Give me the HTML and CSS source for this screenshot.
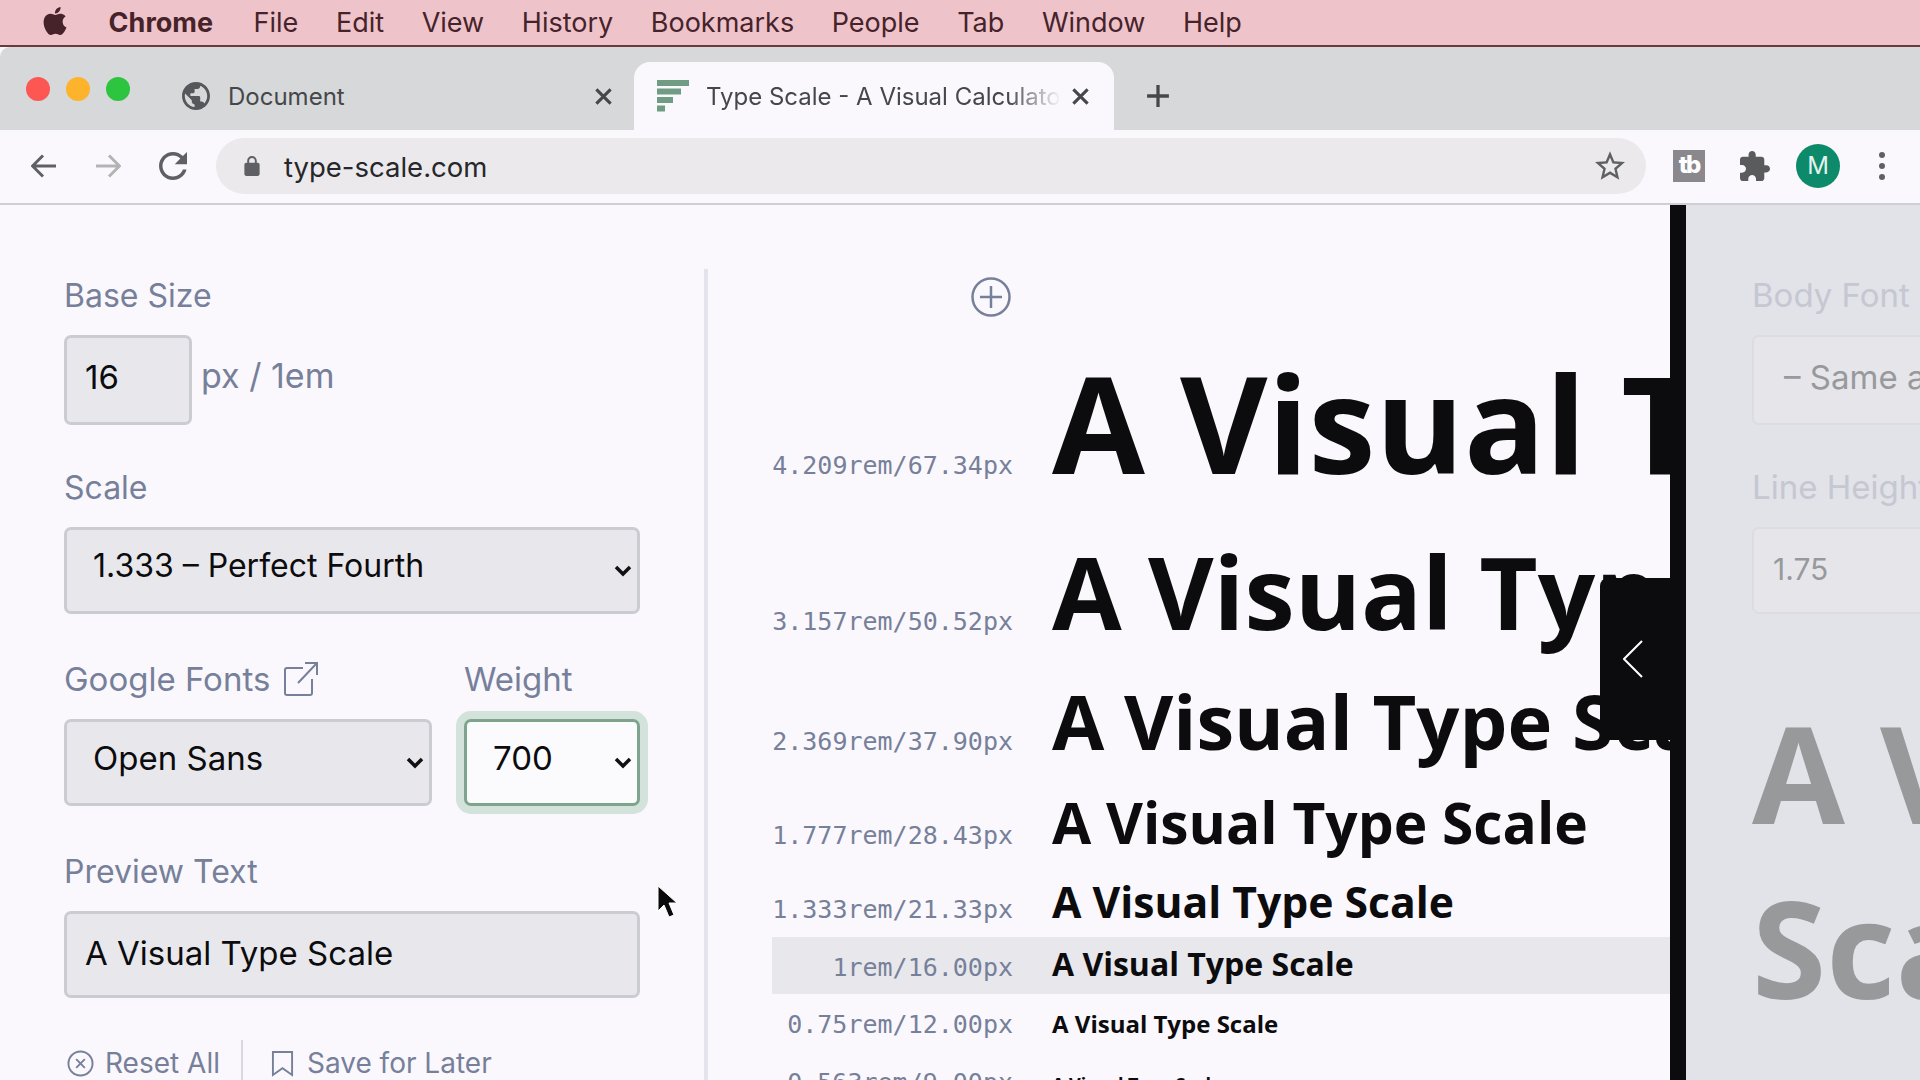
FILE: index.html
```html
<!DOCTYPE html>
<html lang="en">
<head>
    <meta charset="UTF-8">
    <meta name="viewport" content="width=device-width, initial-scale=1.0">
    <title>Type Scale - A Visual Calculator</title>
    <link rel="stylesheet" href="styles.css">
</head>
<body>
    <!-- macOS menu bar -->
    <header class="menubar">
        <svg class="apple" viewBox="0 0 24 24"><path d="M12.152 6.896c-.948 0-2.415-1.078-3.96-1.04-2.04.027-3.91 1.183-4.961 3.014-2.117 3.675-.546 9.103 1.519 12.09 1.013 1.454 2.208 3.09 3.792 3.039 1.52-.065 2.09-.987 3.935-.987 1.831 0 2.35.987 3.96.948 1.637-.026 2.676-1.48 3.676-2.948 1.156-1.688 1.636-3.325 1.662-3.415-.039-.013-3.182-1.221-3.22-4.857-.026-3.04 2.48-4.494 2.597-4.559-1.429-2.09-3.623-2.324-4.39-2.376-2-.156-3.675 1.09-4.61 1.09zM15.53 3.83c.843-1.012 1.4-2.427 1.245-3.83-1.207.052-2.662.805-3.532 1.818-.78.896-1.454 2.338-1.273 3.714 1.338.104 2.715-.688 3.559-1.701"/></svg>
        <span class="menu-app">Chrome</span>
        <span>File</span>
        <span>Edit</span>
        <span>View</span>
        <span>History</span>
        <span>Bookmarks</span>
        <span>People</span>
        <span>Tab</span>
        <span>Window</span>
        <span>Help</span>
    </header>

    <!-- Tab strip -->
    <div class="tabstrip">
        <div class="traffic">
            <i class="light red"></i>
            <i class="light yellow"></i>
            <i class="light green"></i>
        </div>
        <div class="tab">
            <svg class="tab-icon" viewBox="2 2 20 20"><path d="M12 2C6.48 2 2 6.48 2 12s4.48 10 10 10 10-4.48 10-10S17.52 2 12 2zm-1 17.93c-3.95-.49-7-3.85-7-7.93 0-.62.08-1.21.21-1.79L9 15v1c0 1.1.9 2 2 2v1.93zm6.9-2.54c-.26-.81-1-1.39-1.9-1.39h-1v-3c0-.55-.45-1-1-1H8v-2h2c.55 0 1-.45 1-1V7h2c1.1 0 2-.9 2-2v-.41c2.93 1.19 5 4.06 5 7.41 0 2.08-.8 3.97-2.1 5.39z"/></svg>
            <span class="tab-title">Document</span>
            <svg class="tab-close" viewBox="0 0 16 16"><path d="M2 2l12 12M14 2L2 14"/></svg>
        </div>
        <div class="tab tab-active">
            <svg class="tab-favicon" viewBox="0 0 32 32"><path d="M0 0h32v6H0zM0 8.500h24v6H0zM0 17h16v6H0zM0 25.500h8v6H0z"/></svg>
            <span class="tab-title tab-fade">Type Scale - A Visual Calculator</span>
            <svg class="tab-close" viewBox="0 0 16 16"><path d="M2 2l12 12M14 2L2 14"/></svg>
        </div>
        <svg class="tab-new" viewBox="0 0 22 22"><path d="M11 1v20M1 11h20"/></svg>
    </div>

    <!-- Toolbar -->
    <div class="toolbar">
        <svg class="nav-icon" viewBox="0 0 26 26"><path d="M25 13H2M12 2.500L1.500 13 12 23.500"/></svg>
        <svg class="nav-icon nav-disabled" viewBox="0 0 26 26"><path d="M1 13h23M14 2.500L24.500 13 14 23.500"/></svg>
        <svg class="reload" viewBox="4 4 16 16"><path d="M17.650 6.350C16.200 4.900 14.210 4 12 4c-4.420 0-7.990 3.580-7.990 8s3.570 8 7.990 8c3.730 0 6.840-2.550 7.730-6h-2.080c-.82 2.330-3.040 4-5.650 4-3.310 0-6-2.690-6-6s2.690-6 6-6c1.660 0 3.140.69 4.220 1.780L13 11h7V4l-2.350 2.350z"/></svg>
        <div class="omnibox">
            <svg class="lock" viewBox="4 1 16 21"><path d="M18 8h-1V6c0-2.760-2.240-5-5-5S7 3.240 7 6v2H6c-1.100 0-2 .9-2 2v10c0 1.100.9 2 2 2h12c1.100 0 2-.9 2-2V10c0-1.100-.9-2-2-2zM9 6c0-1.660 1.340-3 3-3s3 1.340 3 3v2H9V6z"/></svg>
            <span class="url">type-scale.com</span>
            <svg class="star" viewBox="2 2 20 19"><path d="M22 9.240l-7.190-.62L12 2 9.190 8.630 2 9.240l5.460 4.730L5.820 21 12 17.270 18.180 21l-1.630-7.030L22 9.240zM12 15.400l-3.760 2.270 1-4.280-3.320-2.880 4.380-.38L12 6.100l1.710 4.040 4.380.38-3.320 2.880 1 4.280L12 15.400z"/></svg>
        </div>
        <span class="ext-tb">tb</span>
        <svg class="ext-puzzle" viewBox="2 1 21 21"><path d="M20.500 11H19V7c0-1.100-.9-2-2-2h-4V3.500C13 2.120 11.880 1 10.500 1S8 2.120 8 3.500V5H4c-1.100 0-1.990.9-1.990 2v3.800H3.500c1.490 0 2.700 1.210 2.700 2.700s-1.210 2.700-2.700 2.700H2V20c0 1.100.9 2 2 2h3.800v-1.500c0-1.490 1.210-2.700 2.700-2.700 1.490 0 2.700 1.210 2.700 2.700V22H17c1.100 0 2-.9 2-2v-4h1.500c1.380 0 2.500-1.120 2.500-2.500S21.880 11 20.500 11z"/></svg>
        <span class="avatar">M</span>
        <span class="kebab"><i></i><i></i><i></i></span>
    </div>

    <!-- Page -->
    <main class="page">
        <aside class="controls">
            <div class="field field-base">
                <label>Base Size</label>
                <div class="base-row">
                    <input class="control control-base" type="text" value="16">
                    <span class="unit">px / 1em</span>
                </div>
            </div>
            <div class="field">
                <label>Scale</label>
                <select class="control control-select control-scale">
                    <option>1.333 – Perfect Fourth</option>
                </select>
            </div>
            <div class="field-pair">
                <div class="field field-font">
                    <label>Google Fonts
                        <svg class="external" viewBox="0 0 34 34"><path d="M19 6H3a2 2 0 0 0-2 2v23a2 2 0 0 0 2 2h23a2 2 0 0 0 2-2V17M14 21L33 1M21 1h12v12"/></svg>
                    </label>
                    <select class="control control-select">
                        <option>Open Sans</option>
                    </select>
                </div>
                <div class="field field-weight">
                    <label>Weight</label>
                    <select class="control control-select is-focused">
                        <option>700</option>
                    </select>
                </div>
            </div>
            <div class="field">
                <label>Preview Text</label>
                <input class="control" type="text" value="A Visual Type Scale">
            </div>
            <div class="actions">
                <span class="action">
                    <svg class="action-icon" viewBox="0 0 28 28"><circle cx="14" cy="14" r="12.500"/><path d="M9.500 9.500l9 9M18.500 9.500l-9 9"/></svg>
                    Reset All
                </span>
                <span class="action action-save">
                    <svg class="action-icon action-bookmark" viewBox="0 0 24 28"><path d="M2 2h20v24l-10-7-10 7z"/></svg>
                    Save for Later
                </span>
            </div>
        </aside>

        <section class="preview">
            <div class="add-row">
                <svg class="add" viewBox="0 0 40 40"><circle cx="20" cy="20" r="18.500"/><path d="M20 9v22M9 20h22"/></svg>
            </div>
            <div class="step step-1"><span class="step-label">4.209rem/67.34px</span><span class="sample">A Visual Type Scale</span></div>
            <div class="step step-2"><span class="step-label">3.157rem/50.52px</span><span class="sample">A Visual Type Scale</span></div>
            <div class="step step-3"><span class="step-label">2.369rem/37.90px</span><span class="sample">A Visual Type Scale</span></div>
            <div class="step step-4"><span class="step-label">1.777rem/28.43px</span><span class="sample">A Visual Type Scale</span></div>
            <div class="step step-5"><span class="step-label">1.333rem/21.33px</span><span class="sample">A Visual Type Scale</span></div>
            <div class="step step-6"><span class="step-label">1rem/16.00px</span><span class="sample">A Visual Type Scale</span></div>
            <div class="step step-7"><span class="step-label">0.75rem/12.00px</span><span class="sample">A Visual Type Scale</span></div>
            <div class="step step-8"><span class="step-label">0.563rem/9.00px</span><span class="sample">A Visual Type Scale</span></div>
        </section>

        <button class="drawer-toggle">
            <svg viewBox="0 0 20 38"><path d="M19 1L1 19l18 18"/></svg>
        </button>

        <aside class="drawer">
            <div class="drawer-inner">
                <div class="field field-base">
                    <label>Body Font</label>
                    <div class="drawer-control">– Same as Heading</div>
                </div>
                <div class="field">
                    <label>Line Height</label>
                    <div class="drawer-control drawer-input">1.75</div>
                </div>
                <p class="drawer-sample">A Visual Type Scale</p>
            </div>
        </aside>
    </main>

    <!-- Mouse pointer -->
    <svg class="pointer" viewBox="0 0 21 33"><path d="M1 1v25l6-6 5 12 5-2-5-12h8z"/></svg>
</body>
</html>
```

FILE: styles.css
```css
/* General Styles */
* {
    box-sizing: border-box;
}

body {
    margin: 0;
    width: 1920px;
    height: 1080px;
    overflow: hidden;
    font-family: 'Inter', sans-serif;
    background-color: #faf8fc;
}

svg {
    display: block;
    flex: none;
}

/* Menu Bar */
.menubar {
    display: flex;
    align-items: center;
    gap: 37.600px;
    height: 47px;
    padding: 1px 0 1px 41px;
    background-color: #efc3ca;
    border-bottom: 2px solid #6b3a40;
    color: #46232a;
    font-size: 27px;
}

.apple {
    width: 28px;
    height: 30px;
    margin-top: -4px;
    margin-right: 2px;
    fill: #46232a;
}

.menu-app {
    margin-right: 3px;
    font-weight: 700;
}

/* Tab Strip */
.tabstrip {
    display: flex;
    height: 83px;
    background-color: #d6d8da;
    border-top-left-radius: 10px;
}

.traffic {
    display: flex;
    gap: 16px;
    width: 172px;
    padding: 30px 0 0 26px;
}

.light {
    width: 24px;
    height: 24px;
    border-radius: 50%;
}

.red {
    background-color: #fc5753;
}

.yellow {
    background-color: #fdb32c;
}

.green {
    background-color: #2dc53f;
}

.tab {
    display: flex;
    align-items: center;
    width: 462px;
    margin-top: 15px;
    padding: 0 21px 0 10px;
    color: #45474a;
    font-size: 24px;
}

.tab-icon {
    width: 28px;
    height: 28px;
    margin-right: 18px;
    fill: #55575a;
}

.tab-title {
    flex: 1;
    overflow: hidden;
    white-space: nowrap;
}

.tab-close {
    width: 19px;
    height: 19px;
    margin-left: 10px;
    fill: none;
    stroke: #45474a;
    stroke-width: 2.600;
}

.tab-active {
    width: 480px;
    padding: 0 24px 0 23px;
    background-color: #faf8fc;
    border-radius: 16px 16px 0 0;
}

.tab-favicon {
    width: 32px;
    height: 32px;
    margin-right: 17px;
    fill: #6f9c82;
}

.tab-fade {
    -webkit-mask-image: linear-gradient(to right, #000 85%, transparent 100%);
    mask-image: linear-gradient(to right, #000 85%, transparent 100%);
}

.tab-new {
    width: 24px;
    height: 24px;
    margin: 37px 0 0 32px;
    fill: none;
    stroke: #45474a;
    stroke-width: 3;
}

/* Toolbar */
.toolbar {
    display: flex;
    align-items: center;
    height: 75px;
    padding: 0 0 2px 31px;
    background-color: #faf8fc;
    border-bottom: 2px solid #d0ced2;
}

.nav-icon {
    width: 26px;
    height: 26px;
    margin-right: 38px;
    fill: none;
    stroke: #5f6063;
    stroke-width: 3;
}

.nav-disabled {
    stroke: #b3b3b6;
}

.reload {
    width: 28px;
    height: 28px;
    fill: #5f6063;
}

.omnibox {
    display: flex;
    align-items: center;
    width: 1430px;
    height: 56px;
    margin: 0 27px 0 29px;
    padding: 0 21px 0 28px;
    background-color: #ebe9eb;
    border-radius: 28px;
}

.lock {
    width: 16px;
    height: 20px;
    fill: #5f6063;
}

.url {
    flex: 1;
    margin: 2px 0 0 24px;
    color: #26272a;
    font-size: 27.500px;
}

.star {
    width: 30px;
    height: 29px;
    fill: #5f6063;
}

.ext-tb {
    width: 32px;
    height: 32px;
    margin-right: 35px;
    background-color: #8a888c;
    color: #fff;
    font-size: 24px;
    font-weight: 800;
    line-height: 30px;
    letter-spacing: -2px;
    text-align: center;
}

.ext-puzzle {
    width: 30px;
    height: 30px;
    margin-right: 26px;
    fill: #5a5b5d;
}

.avatar {
    width: 44px;
    height: 44px;
    margin-right: 39px;
    background-color: #0d8a6a;
    border-radius: 50%;
    color: #e3f3ee;
    font-size: 24px;
    line-height: 44px;
    text-align: center;
}

.kebab {
    display: flex;
    flex-direction: column;
    gap: 5px;
}

.kebab i {
    width: 6px;
    height: 6px;
    background-color: #5f6063;
    border-radius: 50%;
}

/* Page Layout */
.page {
    position: relative;
    display: flex;
    height: 875px;
    overflow: hidden;
}

.controls {
    flex: none;
    width: 708px;
    margin-top: 64px;
    padding: 3px 64px 0;
    border-right: 4px solid #e4e2ea;
}

label {
    display: flex;
    align-items: center;
    gap: 14px;
    height: 46px;
    margin-bottom: 17px;
    color: #76809a;
    font-size: 32px;
}

.field {
    margin-bottom: 42px;
}

.field-base {
    margin-bottom: 39px;
}

.field-pair {
    display: flex;
    gap: 32px;
}

.field-pair label {
    font-size: 33px;
}

.field-font {
    width: 368px;
}

.field-weight {
    width: 176px;
}

.control {
    display: block;
    width: 100%;
    height: 87px;
    padding: 0 18px 4px;
    background-color: #e8e8ec;
    border: 3px solid #cbccd2;
    border-radius: 7px;
    color: #0c0c0e;
    font-family: inherit;
    font-size: 33px;
    outline: none;
}

.control-select {
    padding: 0 18px 10px 26px;
    appearance: none;
    -webkit-appearance: none;
    background-image: url("data:image/svg+xml,%3Csvg xmlns='http://www.w3.org/2000/svg' viewBox='0 0 18 12'%3E%3Cpath d='M2 2l7 7 7-7' fill='none' stroke='%23111' stroke-width='3.500'/%3E%3C/svg%3E");
    background-repeat: no-repeat;
    background-position: right 5px center;
    background-size: 18px 12px;
}

.control-scale {
    font-size: 32px;
}

.is-focused {
    background-color: #fbfafd;
    border-color: #7ea48e;
    box-shadow: 0 0 0 8px #d3e2da;
}

.base-row {
    display: flex;
    align-items: center;
    gap: 9px;
}

.control-base {
    width: 128px;
    height: 90px;
    padding-bottom: 7px;
}

.unit {
    margin-bottom: 9px;
    color: #76809a;
    font-size: 34px;
}

.external {
    width: 34px;
    height: 34px;
    fill: none;
    stroke: #76809a;
    stroke-width: 2;
}

/* Reset and Save Links */
.actions {
    display: flex;
    align-items: center;
    height: 46px;
    margin-top: 2px;
    color: #76809a;
    font-size: 28px;
}

.action {
    display: flex;
    align-items: center;
    gap: 11px;
    padding-left: 3px;
}

.action-save {
    gap: 13px;
    margin-left: 21px;
    padding-left: 28px;
    border-left: 2px solid #d9d8e0;
    line-height: 46px;
}

.action-icon {
    width: 27px;
    height: 27px;
    fill: none;
    stroke: #76809a;
    stroke-width: 2;
}

.action-bookmark {
    width: 23px;
    height: 27px;
}

/* Preview Column */
.preview {
    flex: none;
    width: 962px;
    padding-left: 64px;
    overflow: hidden;
}

.add-row {
    display: flex;
    justify-content: flex-end;
    width: 241px;
    height: 130px;
    padding-top: 72px;
}

.add {
    width: 40px;
    height: 40px;
    margin-right: 2px;
    fill: none;
    stroke: #76809a;
    stroke-width: 2.500;
}

.step {
    display: flex;
    align-items: baseline;
    gap: 39px;
    width: 2000px;
    padding-top: 6px;
    white-space: nowrap;
}

.step-label {
    flex: none;
    width: 241px;
    color: #76809a;
    font-family: 'DejaVu Sans Mono', monospace;
    font-size: 25px;
    line-height: 1;
    text-align: right;
}

.sample {
    color: #0c0c0e;
    font-family: 'Open Sans', sans-serif;
    font-weight: 700;
    line-height: 1.2;
}

.step-1 { height: 190px; }
.step-2 { height: 145px; }
.step-3 { height: 112px; }
.step-4 { height: 88px; }
.step-5 { height: 67px; }
.step-6 { height: 57px; margin-bottom: 9px; padding-top: 8px; background-color: #e8e8ec; }
.step-7 { height: 61px; padding-top: 7px; }
.step-8 { height: 40px; }

.step-1 .sample { font-size: 134.680px; }
.step-2 .sample { font-size: 101.040px; }
.step-3 .sample { font-size: 75.800px; }
.step-4 .sample { font-size: 56.860px; }
.step-5 .sample { font-size: 42.660px; }
.step-6 .sample { font-size: 32px; }
.step-7 .sample { font-size: 24px; }
.step-8 .sample { font-size: 18px; }

/* Drawer */
.drawer-toggle {
    position: absolute;
    top: 373px;
    left: 1600px;
    width: 70px;
    height: 162px;
    padding: 0 0 0 23px;
    background-color: #0c0c0e;
    border: none;
    border-radius: 8px 0 0 8px;
}

.drawer-toggle svg {
    width: 20px;
    height: 38px;
    fill: none;
    stroke: #fff;
    stroke-width: 2;
}

.drawer {
    flex: 1;
    padding-top: 67px;
    padding-left: 66px;
    overflow: hidden;
    background-color: #e2e2e9;
    border-left: 16px solid #0c0c0e;
}

.drawer-inner {
    width: 1000px;
}

.drawer label {
    color: #c5c7d2;
    font-size: 33px;
}

.drawer-control {
    display: flex;
    align-items: center;
    width: 500px;
    height: 90px;
    padding: 0 0 7px 30px;
    background-color: #e6e6ea;
    border: 2px solid #dcdce2;
    border-radius: 7px;
    color: #97999c;
    font-size: 33px;
}

.drawer-input {
    height: 87px;
    padding: 0 0 4px 19px;
    font-size: 30px;
}

.drawer-sample {
    width: 980px;
    margin: 70px 0 0;
    color: #97999a;
    font-family: 'Open Sans', sans-serif;
    font-size: 134.680px;
    font-weight: 700;
    line-height: 175px;
}

/* Mouse pointer */
.pointer {
    position: absolute;
    top: 885px;
    left: 657px;
    width: 21px;
    height: 33px;
    fill: #0a0a0a;
    stroke: #fff;
    stroke-width: 1;
}
```
